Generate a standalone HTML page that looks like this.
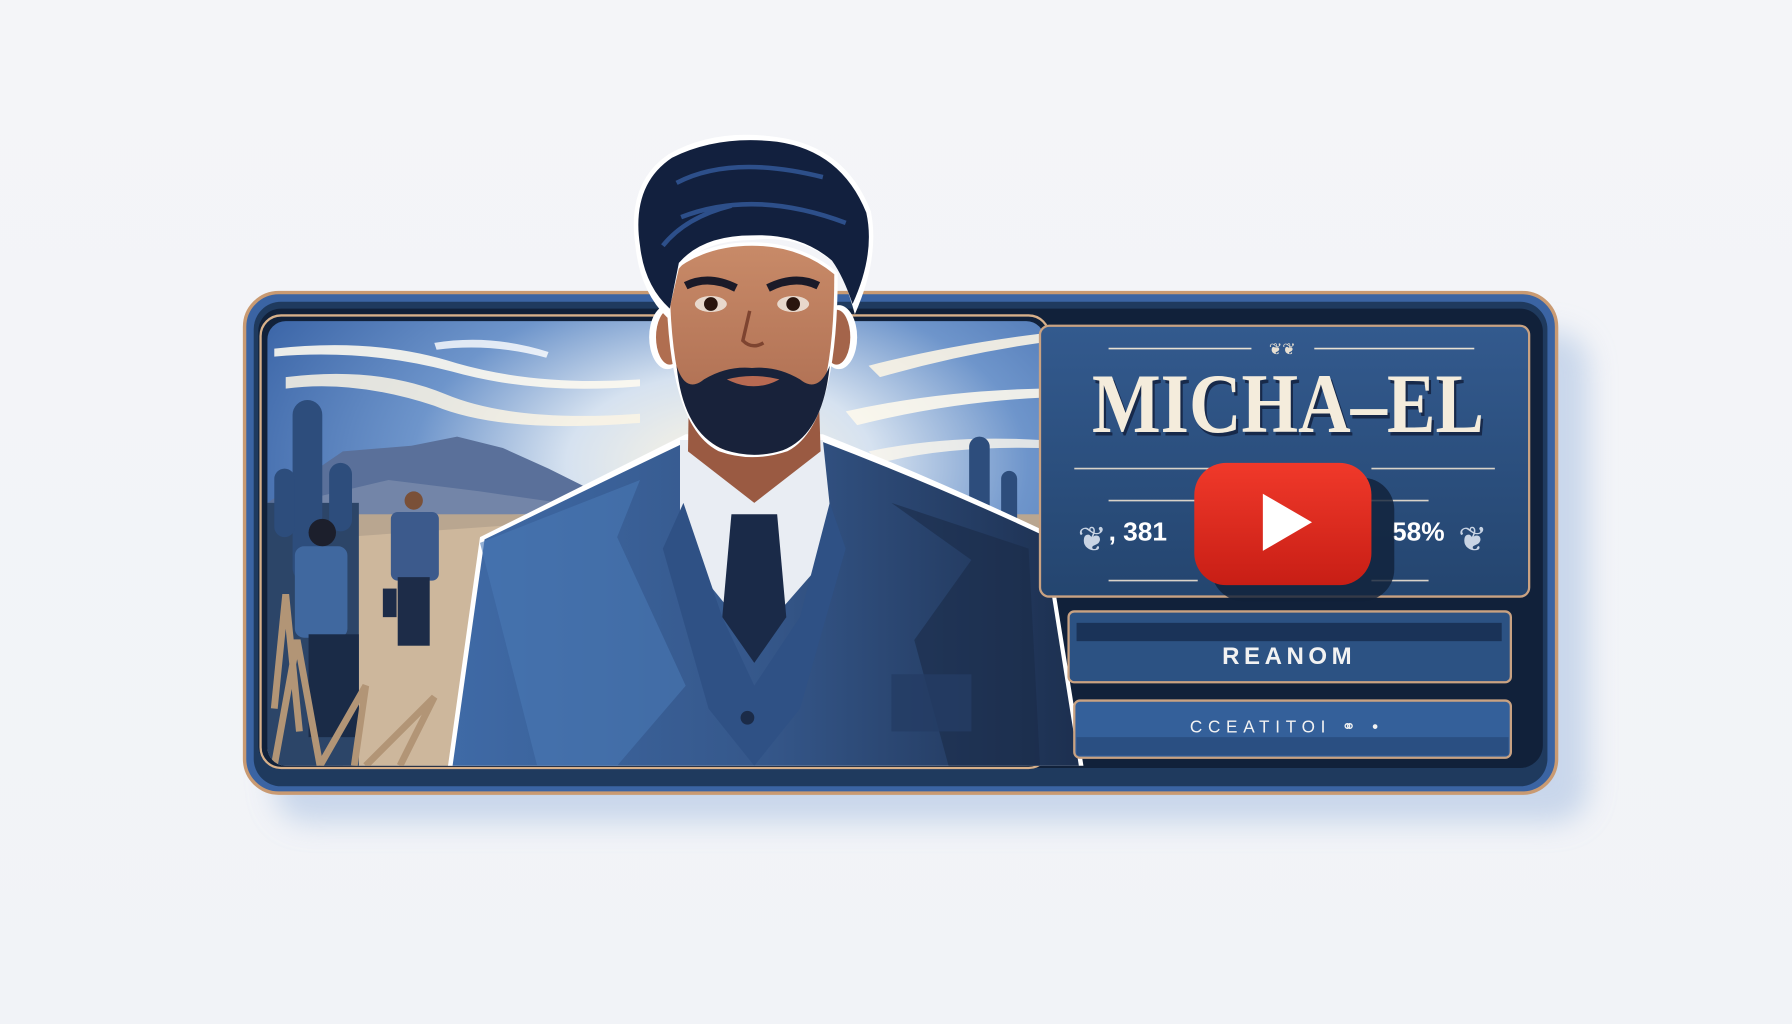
<!DOCTYPE html>
<html><head><meta charset="utf-8"><style>
html,body{margin:0;padding:0;background:#f3f4f8;}
svg{display:block}
</style></head><body>
<svg width="1792" height="1024" viewBox="0 0 1568 896" xmlns="http://www.w3.org/2000/svg">
<defs>
<linearGradient id="bg" x1="0" y1="0" x2="0" y2="1"><stop offset="0" stop-color="#f4f5f8"/><stop offset="1" stop-color="#f1f3f7"/></linearGradient>
<radialGradient id="sky" cx="0.58" cy="0.32" r="0.65"><stop offset="0" stop-color="#fbf4e2"/><stop offset="0.3" stop-color="#d6e2f0"/><stop offset="0.6" stop-color="#6e95cb"/><stop offset="1" stop-color="#3c66a8"/></radialGradient>
<linearGradient id="panel" x1="0" y1="0" x2="0" y2="1"><stop offset="0" stop-color="#335a8e"/><stop offset="1" stop-color="#24456f"/></linearGradient>
<linearGradient id="yt" x1="0" y1="0" x2="0" y2="1"><stop offset="0" stop-color="#f0392a"/><stop offset="1" stop-color="#c81e15"/></linearGradient>
<linearGradient id="suit" x1="0" y1="0" x2="1" y2="0"><stop offset="0" stop-color="#3f6aa6"/><stop offset="0.5" stop-color="#35578a"/><stop offset="1" stop-color="#1c2f4f"/></linearGradient>
<linearGradient id="skin" x1="0" y1="0" x2="0" y2="1"><stop offset="0" stop-color="#c88a68"/><stop offset="1" stop-color="#a8684d"/></linearGradient>
<filter id="sh" x="-10%" y="-10%" width="130%" height="140%"><feGaussianBlur stdDeviation="12"/></filter>
<clipPath id="sc"><rect x="234" y="281" width="680" height="389" rx="16"/></clipPath>
</defs>
<rect width="1568" height="896" fill="url(#bg)"/>
<rect x="240" y="290" width="1150" height="430" rx="30" fill="#b8cbe6" opacity="0.7" filter="url(#sh)"/>
<rect x="214" y="256" width="1148" height="438" rx="30" fill="#3b64a3" stroke="#c99a72" stroke-width="3"/>
<rect x="222" y="264" width="1132" height="424" rx="24" fill="#1f3a5e"/>
<rect x="226" y="270" width="1124" height="402" rx="20" fill="#11213a"/>
<rect x="228" y="276" width="690" height="396" rx="18" fill="none" stroke="#d7b08a" stroke-width="2"/>
<g clip-path="url(#sc)">
<rect x="230" y="278" width="690" height="400" fill="url(#sky)"/>
<path d="M240 305 Q330 295 400 318 Q470 338 560 332 L560 338 Q470 346 395 325 Q320 305 240 312Z" fill="#fdf9ef" opacity="0.9"/>
<path d="M250 330 Q330 320 390 345 Q450 370 560 362 L560 370 Q440 380 380 355 Q310 332 250 340Z" fill="#fbf4e4" opacity="0.85"/>
<path d="M380 300 Q430 292 480 308 L478 313 Q430 300 382 306Z" fill="#fff" opacity="0.8"/>
<path d="M760 320 Q830 302 910 292 L910 300 Q840 310 770 330Z" fill="#fbf4e4" opacity="0.9"/>
<path d="M740 360 Q820 342 910 340 L910 348 Q830 352 750 372Z" fill="#fdf8ec" opacity="0.9"/>
<path d="M760 395 Q830 380 910 385 L910 392 Q830 390 770 405Z" fill="#fdf8ec" opacity="0.8"/>
<path d="M234 440 L300 395 L360 390 L400 382 L440 392 L480 410 L520 430 L560 445 L234 460Z" fill="#5a709a"/>
<path d="M234 445 L340 420 L420 430 L560 450 L234 470Z" fill="#7d8eae" opacity="0.7"/>
<rect x="234" y="450" width="680" height="230" fill="#b9a690"/>
<path d="M300 470 L440 460 L400 670 L300 670Z" fill="#cdb79c"/>
<rect x="234" y="440" width="80" height="240" fill="#2c4568"/>
<rect x="256" y="350" width="26" height="160" rx="13" fill="#2d4d7c"/>
<rect x="288" y="405" width="20" height="60" rx="10" fill="#2d4d7c"/>
<rect x="240" y="410" width="18" height="60" rx="9" fill="#2d4d7c"/>
<rect x="848" y="382" width="18" height="80" rx="9" fill="#2d4d7c"/>
<rect x="876" y="412" width="14" height="50" rx="7" fill="#2d4d7c"/>
<rect x="342" y="448" width="42" height="60" rx="6" fill="#3c5a8c"/>
<rect x="348" y="505" width="28" height="60" fill="#1d2c48"/>
<circle cx="362" cy="438" r="8" fill="#7a5038"/>
<rect x="335" y="515" width="12" height="25" fill="#1d2c48"/>
<rect x="258" y="478" width="46" height="80" rx="8" fill="#40689f"/>
<rect x="270" y="555" width="44" height="90" fill="#1a2b47"/>
<circle cx="282" cy="466" r="12" fill="#1c1f2c"/>
<path d="M240 670 L260 560 L280 670 M280 670 L320 600 L310 670 M320 670 L380 610 L350 670 M240 620 L250 520 L262 640" stroke="#b29576" stroke-width="6" fill="none"/>
</g>
<!-- main person -->
<path d="M392 670 L420 470 Q520 420 600 380 L720 380 Q820 420 915 465 L948 670Z" fill="#fff"/>
<path d="M396 670 L424 472 Q520 425 602 386 L718 386 Q820 425 912 468 L944 670Z" fill="url(#suit)"/>
<path d="M595 385 L720 385 L730 480 L660 560 L595 480Z" fill="#e9edf3"/>
<path d="M640 450 L680 450 L688 540 L660 580 L632 540Z" fill="#1a2a48"/>
<path d="M598 440 L632 540 L660 600 L700 540 L726 440 L740 480 L700 620 L660 670 L620 620 L580 480Z" fill="#2f5185"/>
<path d="M420 475 L560 420 L540 470 L600 600 L540 670 L470 670Z" fill="#4a78b4" opacity="0.6"/>
<path d="M780 440 L850 490 L800 560 L830 670 L910 670 L900 480Z" fill="#1a2b48" opacity="0.6"/>
<rect x="780" y="590" width="70" height="50" fill="#243c64" opacity="0.8"/>
<circle cx="654" cy="628" r="6" fill="#1b2b48"/>
<!-- neck & head -->
<path d="M603 330 L716 330 L718 395 L660 440 L602 395Z" fill="#9a5a42"/>
<ellipse cx="584" cy="295" rx="16" ry="28" fill="#fff"/>
<ellipse cx="734" cy="295" rx="16" ry="28" fill="#fff"/>
<ellipse cx="586" cy="295" rx="12" ry="24" fill="#b06e50"/>
<ellipse cx="732" cy="295" rx="12" ry="24" fill="#a4644a"/>
<path d="M586 240 Q586 370 630 392 Q658 402 688 392 Q730 370 730 240 Q700 215 658 215 Q615 215 586 240Z" fill="#fff" stroke="#fff" stroke-width="6"/>
<path d="M586 240 Q586 370 630 392 Q658 402 688 392 Q730 370 730 240 Q700 215 658 215 Q615 215 586 240Z" fill="url(#skin)"/>
<path d="M592 320 Q598 380 635 394 Q660 402 685 394 Q720 380 726 320 Q716 345 700 332 Q680 320 658 322 Q636 320 616 332 Q600 345 592 320Z" fill="#18223a"/>
<path d="M636 332 Q658 326 682 332 Q660 344 636 332Z" fill="#b86a52"/>
<path d="M600 250 Q620 240 644 252" stroke="#1a1a28" stroke-width="7" fill="none"/>
<path d="M672 252 Q696 240 716 250" stroke="#1a1a28" stroke-width="7" fill="none"/>
<ellipse cx="622" cy="266" rx="14" ry="7" fill="#e8d8cc"/><circle cx="622" cy="266" r="6" fill="#2a150e"/>
<ellipse cx="694" cy="266" rx="14" ry="7" fill="#e8d8cc"/><circle cx="694" cy="266" r="6" fill="#2a150e"/>
<path d="M656 272 L650 298 Q658 306 668 300" stroke="#7e4430" stroke-width="3" fill="none"/>
<path d="M556 215 Q548 160 585 135 Q625 112 680 120 Q740 128 762 185 Q770 225 748 275 Q740 245 730 230 Q700 205 658 210 Q615 210 594 235 L584 278 Q560 255 556 215Z" fill="#fff"/>
<path d="M560 215 Q552 162 588 138 Q628 118 680 124 Q736 132 758 186 Q766 222 746 266 Q738 242 728 228 Q700 204 658 206 Q615 206 594 230 L586 270 Q564 250 560 215Z" fill="#12203e"/>
<path d="M592 160 Q640 135 720 155 M596 190 Q660 165 740 195 M580 215 Q600 190 640 180" stroke="#2d4f8a" stroke-width="4" fill="none"/>
<!-- right panel -->
<rect x="910" y="285" width="428" height="237" rx="8" fill="url(#panel)" stroke="#c9a282" stroke-width="2"/>
<line x1="970" y1="305" x2="1095" y2="305" stroke="#e8e0d2" stroke-width="1.5"/>
<line x1="1150" y1="305" x2="1290" y2="305" stroke="#e8e0d2" stroke-width="1.5"/>
<text x="1122" y="310" font-family="Liberation Serif, serif" font-size="14" fill="#e8e0d2" text-anchor="middle">❦❦</text>
<text x="1127" y="378" font-family="Liberation Serif, serif" font-weight="bold" font-size="74" fill="#17294a" text-anchor="middle" textLength="343" lengthAdjust="spacingAndGlyphs" transform="translate(2,3)">MICHA–EL</text>
<text x="1127" y="378" font-family="Liberation Serif, serif" font-weight="bold" font-size="74" fill="#f4ecdc" text-anchor="middle" textLength="343" lengthAdjust="spacingAndGlyphs">MICHA–EL</text>
<line x1="940" y1="410" x2="1078" y2="410" stroke="#d8d2c8" stroke-width="1.5"/>
<line x1="1200" y1="410" x2="1308" y2="410" stroke="#d8d2c8" stroke-width="1.5"/>
<line x1="970" y1="438" x2="1048" y2="438" stroke="#d8d2c8" stroke-width="1.5"/>
<line x1="1200" y1="438" x2="1250" y2="438" stroke="#d8d2c8" stroke-width="1.5"/>
<line x1="970" y1="508" x2="1048" y2="508" stroke="#d8d2c8" stroke-width="1.5"/>
<line x1="1200" y1="508" x2="1250" y2="508" stroke="#d8d2c8" stroke-width="1.5"/>
<text x="943" y="482" font-family="Liberation Serif, serif" font-size="30" fill="#c8d4e4">❦</text>
<text x="1276" y="482" font-family="Liberation Serif, serif" font-size="30" fill="#c8d4e4">❦</text>
<text x="970" y="473" font-family="Liberation Sans, sans-serif" font-weight="bold" font-size="23" fill="#ffffff">, 381</text>
<text x="1218" y="473" font-family="Liberation Sans, sans-serif" font-weight="bold" font-size="23" fill="#ffffff">58%</text>
<rect x="1060" y="418" width="160" height="108" rx="28" fill="#102038" opacity="0.8"/>
<rect x="1045" y="405" width="155" height="107" rx="28" fill="url(#yt)"/>
<path d="M1105 432 L1105 482 L1148 457Z" fill="#fff"/>
<rect x="935" y="535" width="387" height="62" rx="5" fill="#2c5283" stroke="#c9a282" stroke-width="2"/>
<rect x="942" y="545" width="372" height="16" fill="#1a3358"/>
<text x="1128" y="581" font-family="Liberation Sans, sans-serif" font-weight="bold" font-size="21" letter-spacing="4" fill="#f2f2f2" text-anchor="middle">REANOM</text>
<rect x="940" y="613" width="382" height="50" rx="5" fill="#34609a" stroke="#c9a282" stroke-width="2"/>
<rect x="942" y="645" width="378" height="16" fill="#2a4f82"/>
<text x="1126" y="641" font-family="Liberation Sans, sans-serif" font-size="15" letter-spacing="5" fill="#f2f2f2" text-anchor="middle">CCEATITOI ⚭ •</text>
</svg>
</body></html>
